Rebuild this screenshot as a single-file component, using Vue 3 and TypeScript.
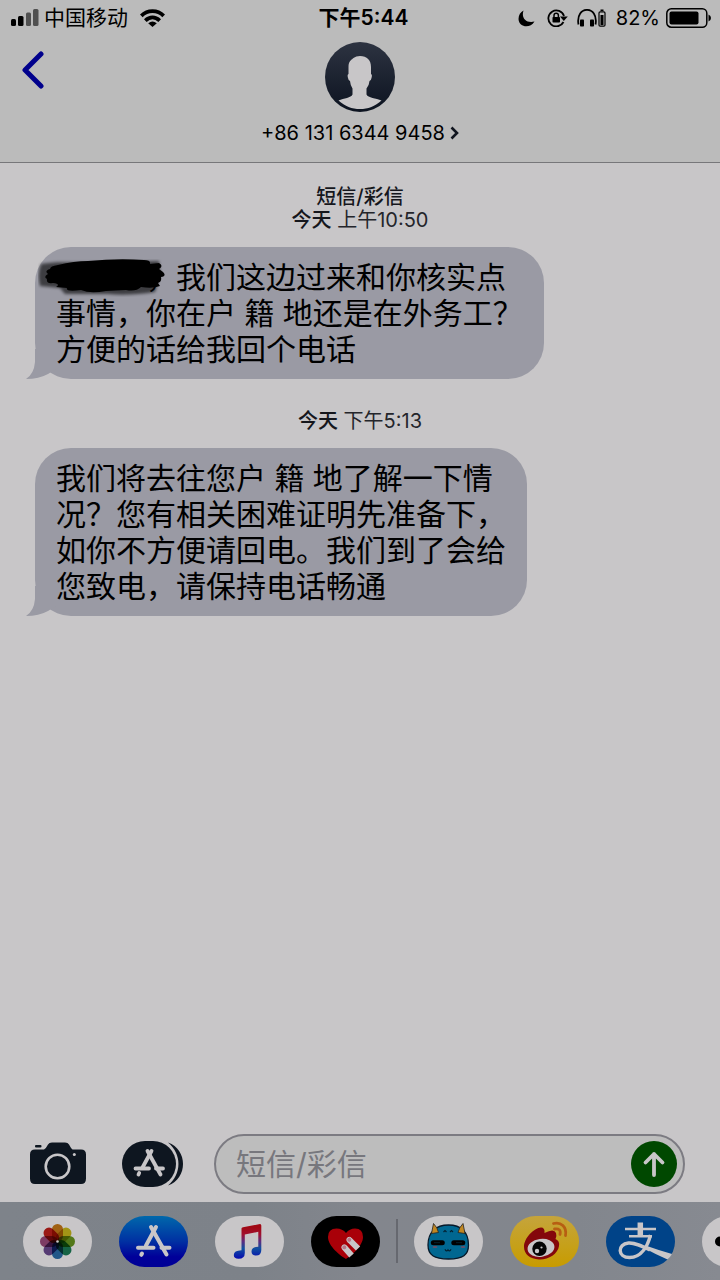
<script setup lang="ts">
import { ref } from 'vue'

interface Message {
  id: number
  service?: string
  day: string
  time: string
  redacted: boolean
  lines: string[]
}

const draft = ref('')

const messages: Message[] = [
  {
    id: 1,
    service: '短信/彩信',
    day: '今天',
    time: '上午10:50',
    redacted: true,
    lines: ['，我们这边过来和你核实点', '事情，你在户 籍 地还是在外务工？', '方便的话给我回个电话'],
  },
  {
    id: 2,
    day: '今天',
    time: '下午5:13',
    redacted: false,
    lines: [
      '我们将去往您户 籍 地了解一下情',
      '况？您有相关困难证明先准备下，',
      '如你不方便请回电。我们到了会给',
      '您致电，请保持电话畅通',
    ],
  },
]

const petals = [
  { angle: 0, color: '#cc7d18' },
  { angle: 45, color: '#cfc01c' },
  { angle: 90, color: '#6a9a20' },
  { angle: 135, color: '#1c8058' },
  { angle: 180, color: '#2a70ad' },
  { angle: 225, color: '#6c4a92' },
  { angle: 270, color: '#a04c80' },
  { angle: 315, color: '#c4201a' },
]
</script>

<template>
  <div class="phone" lang="zh-CN">
    <header class="top">
      <div class="status">
        <div class="status-left">
          <svg class="signal" width="28" height="18" viewBox="0 0 28 18" aria-hidden="true">
            <rect x="0" y="10" width="5" height="7" rx="1.5" />
            <rect x="7" y="7" width="5.500" height="10" rx="1.5" />
            <rect x="15" y="3.500" width="5" height="13.500" rx="1.500" fill="#505050" />
            <rect x="22" y="0" width="5.500" height="17" rx="1.500" fill="#505050" />
          </svg>
          <span>中国移动</span>
          <svg class="wifi" width="25" height="18" viewBox="0 0 25 18" aria-hidden="true">
            <g fill="none" stroke="#000" stroke-width="3.800">
              <path d="M1.300 6.800C7.500 0.500 17.500 0.500 23.700 6.800" />
              <path d="M5.300 11.600C9.700 7.400 15.300 7.400 19.700 11.600" />
            </g>
            <path d="M8.200 14.200Q12.500 10.800 16.800 14.200L12.500 18Z" />
          </svg>
        </div>
        <strong class="clock">下午5:44</strong>
        <div class="status-right">
          <svg width="17" height="17" viewBox="0 0 17 17" aria-hidden="true">
            <path d="M5.500 0.500C3 8 8 13.500 16.500 11.500C12 19 1 17.500 0.500 9C0.500 5 2.500 2 5.500 0.500Z" />
          </svg>
          <svg class="lock" width="21" height="18" viewBox="0 0 21 18" aria-hidden="true">
            <path d="M16.500 13A8 8 0 1 1 17 7" fill="none" stroke="#000" stroke-width="1.800" />
            <path d="M13 7.500H20.800L16.800 12Z" />
            <rect x="5.500" y="8" width="7.500" height="5.500" rx="0.800" />
            <path d="M7 8.500V6.500a2.200 2.200 0 0 1 4.400 0V8.500" fill="none" stroke="#000" stroke-width="1.500" />
          </svg>
          <svg class="headset" width="29" height="18" viewBox="0 0 29 18" aria-hidden="true">
            <path d="M1.500 15.500C-2 -4 22 -4 18.500 15.500" fill="none" stroke="#000" stroke-width="1.800" />
            <rect x="3" y="10.500" width="4" height="7" rx="0.800" />
            <rect x="13" y="10.500" width="4" height="7" rx="0.800" />
            <rect x="22" y="2.800" width="6" height="14.400" rx="1.200" fill="none" stroke="#000" stroke-width="1.200" />
            <rect x="23.500" y="6" width="3" height="10" />
            <rect x="23.500" y="0.500" width="3" height="1.500" />
          </svg>
          <span class="percent">82%</span>
          <svg width="45" height="20" viewBox="0 0 45 20" aria-hidden="true">
            <rect x="0.800" y="0.800" width="40" height="18.400" rx="4.500" fill="none" stroke="#000" stroke-width="1.500" />
            <rect x="3.500" y="3.500" width="29" height="13" rx="2" />
            <path d="M42.500 6.500Q45 7.500 45 10T42.500 13.500Z" />
          </svg>
        </div>
      </div>
      <div class="contact-bar">
        <button class="plain back" type="button" aria-label="返回">
          <svg width="24" height="38" viewBox="0 0 24 38" aria-hidden="true">
            <path d="M20 3L4 19L20 35" fill="none" stroke="#00008c" stroke-width="5" stroke-linecap="round" stroke-linejoin="round" />
          </svg>
        </button>
        <button class="plain contact" type="button">
          <svg width="70" height="70" viewBox="0 0 70 70" aria-hidden="true">
            <defs>
              <linearGradient id="avatar-bg" x1="0" y1="0" x2="0" y2="1">
                <stop offset="0" stop-color="#2d3341" />
                <stop offset="1" stop-color="#0c1320" />
              </linearGradient>
            </defs>
            <circle cx="35" cy="35" r="35" fill="url(#avatar-bg)" />
            <path
              fill="#c8c6c8"
              d="M35 14C42 14 46 18 46 25V32Q47.500 32.500 46.500 36Q46 39 44.500 39Q44 44 41.500 46.500V52.500C43 56 51 56 56.500 58.500C50 64.500 43 67 35 67S20 64.500 13.500 58.500C19 56 26 56 27.500 52.500V46.500Q25.500 44 25 39Q23.500 39 23 36Q22 32.500 23.500 32V25C23.500 18.500 27 17.500 28.500 16Q31 14 35 14Z"
            />
          </svg>
          <span class="number">
            +86 131 6344 9458
            <svg width="9" height="14" viewBox="0 0 9 14" aria-hidden="true">
              <path d="M1.500 1.500L7 7L1.500 12.500" fill="none" stroke="#10151f" stroke-width="2.600" />
            </svg>
          </span>
        </button>
      </div>
    </header>

    <main class="thread">
      <section v-for="message in messages" :key="message.id" class="entry">
        <p class="stamp">
          <b v-if="message.service" class="service">{{ message.service }}</b>
          <span><b>{{ message.day }}</b> {{ message.time }}</span>
        </p>
        <div class="bubble">
          <p class="words"><span v-if="message.redacted" class="redacted"><svg class="scribble" width="130" height="38" viewBox="0 0 130 38" aria-hidden="true">
            <defs>
              <filter id="soft-edge" x="-10%" y="-20%" width="120%" height="140%">
                <feGaussianBlur stdDeviation="1.500" />
              </filter>
            </defs>
            <path d="M3 5C22 1 40 5 70 3L121 2L122 14L117 33Q90 37 70 35L27 35L22 29L2 27Q-1 15 3 5Z" opacity="0.6" filter="url(#soft-edge)" />
            <path d="M20 6Q36 2 50 2Q80 -1 106 1Q113 1 112 5L121 4Q126 7 121 10L125 13Q129 17 123 18Q124 23 120 24L122 27Q115 30 103 28Q98 33 88 31L68 32Q52 35 43 31Q27 33 29 29L18 28Q23 25 15 24Q8 25 9 20Q5 18 10 15Q6 12 12 10Q12 7 20 6Z" />
          </svg></span>{{ message.lines.join('\n') }}</p>
          <svg class="tail" width="30" height="30" viewBox="0 0 30 30" aria-hidden="true">
            <path d="M9 0V13Q8 25 0 30Q13 30 22 25L30 20V0Z" fill="#9a9aa4" />
          </svg>
        </div>
      </section>
    </main>

    <form class="compose" @submit.prevent>
      <button class="plain" type="button" aria-label="相机">
        <svg width="56" height="44" viewBox="0 1.500 56 44" aria-hidden="true">
          <path fill="#0e1620" d="M5 9H14Q16 8 18 4Q19 2 22 2H35Q38 2 39 4Q41 8 42.500 9H51Q56 9 56 14V38Q56 43.500 51 43.500H5Q0 43.500 0 38V14Q0 9 5 9Z" />
          <rect x="5" y="4.500" width="6.500" height="2.500" rx="1" fill="#0e1620" />
          <circle cx="27.500" cy="26" r="11.800" fill="none" stroke="#c8c6c8" stroke-width="2.600" />
          <circle cx="44.300" cy="14" r="1.500" fill="#c8c6c8" />
        </svg>
      </button>
      <button class="plain apps" type="button" aria-label="应用">
        <svg width="62" height="46" viewBox="0 0 62 46" aria-hidden="true">
          <rect width="54" height="46" rx="23" fill="#0e1620" />
          <path d="M46 1.500C56 5 61 14 61 23S56 41 46 44.500C60 33 60 13 46 1.500Z" fill="#0e1620" />
          <g stroke="#c8c6c8" stroke-width="3.800" stroke-linecap="round" fill="none">
            <path d="M29.500 10L20.500 26.500M17.200 32L16.500 33.500" />
            <path d="M13.500 27.500H27M34 27.500H41" />
            <path d="M25.500 10L38.500 33.500" />
          </g>
        </svg>
      </button>
      <div class="field">
        <input v-model="draft" type="text" aria-label="短信/彩信" placeholder="短信/彩信" />
        <button class="plain send" type="submit" aria-label="发送">
          <svg width="46" height="46" viewBox="0 0 46 46" aria-hidden="true">
            <circle cx="23" cy="23" r="23" fill="#004800" />
            <path d="M23 34V13M14.500 21.500L23 13L31.500 21.500" fill="none" stroke="#c8c6c8" stroke-width="3.800" stroke-linecap="round" stroke-linejoin="round" />
          </svg>
        </button>
      </div>
    </form>

    <nav class="dock" aria-label="应用抽屉">
      <div class="group">
        <button class="plain pill" type="button" aria-label="照片">
          <svg class="photos" width="69" height="51" viewBox="0 0 69 51" aria-hidden="true">
            <rect width="69" height="51" rx="25.500" fill="#c8c6c8" />
            <rect v-for="petal in petals" :key="petal.angle" class="petal" x="29" y="8" width="11" height="17.500" rx="5.500" :fill="petal.color" :transform="`rotate(${petal.angle} 34.5 25.5)`" />
            <circle cx="34.500" cy="25.500" r="1.300" fill="#c8c6c8" />
          </svg>
        </button>
        <button class="plain pill" type="button" aria-label="App Store">
          <svg width="69" height="51" viewBox="0 0 69 51" aria-hidden="true">
            <defs>
              <linearGradient id="store-bg" x1="0" y1="0" x2="0" y2="1">
                <stop offset="0" stop-color="#0068ab" />
                <stop offset="0.500" stop-color="#0030a2" />
                <stop offset="0.800" stop-color="#000099" />
                <stop offset="1" stop-color="#000096" />
              </linearGradient>
            </defs>
            <rect width="69" height="51" rx="25.500" fill="url(#store-bg)" />
            <g stroke="#c8c6c8" stroke-width="4" stroke-linecap="round" fill="none">
              <path d="M37 11L27 29.500M23 37.500L22.300 38.800" />
              <path d="M19 31.700H34.500M42.500 31.700H50.500" />
              <path d="M32 11L47.500 38.500" />
            </g>
          </svg>
        </button>
        <button class="plain pill" type="button" aria-label="音乐">
          <svg width="69" height="51" viewBox="0 0 69 51" aria-hidden="true">
            <defs>
              <linearGradient id="note" gradientUnits="userSpaceOnUse" x1="0" y1="8" x2="0" y2="43">
                <stop offset="0.100" stop-color="#a00814" />
                <stop offset="0.300" stop-color="#a01030" />
                <stop offset="0.500" stop-color="#5c2c80" />
                <stop offset="0.700" stop-color="#1050a0" />
                <stop offset="1" stop-color="#0808b0" />
              </linearGradient>
            </defs>
            <rect width="69" height="51" rx="25.500" fill="#c8c6c8" />
            <path fill="url(#note)" d="M28 11.200L45 8Q46.300 8 46.300 9.500V34Q46.300 39.500 41 39.500Q36.500 39.500 36.500 35.500Q36.500 31 43.300 30.800V15.800L29.800 18.500V37Q29.800 42.800 23.500 42.800Q18.800 42.800 18.800 39Q18.800 34.500 26.500 34.200V12.500Q26.500 11.500 28 11.200Z" />
          </svg>
        </button>
        <button class="plain pill" type="button" aria-label="Digital Touch">
          <svg width="69" height="51" viewBox="0 0 69 51" aria-hidden="true">
            <rect width="69" height="51" rx="25.500" fill="#000" />
            <path fill="#a90008" d="M35 43C30 40 17 30.500 17 21Q17 12.500 25.500 12.500Q31.500 12.500 35 17Q38.500 12.500 44 12.500Q52 12.500 52 21C52 30 40 40 35 43Z" />
            <g stroke="#c8c6c8" stroke-width="6">
              <path d="M33.500 31.500L40.500 39.500" />
              <path d="M38.500 24L47 32.500" />
            </g>
            <g fill="#b87888" stroke="#c8c6c8" stroke-width="1">
              <circle cx="33.300" cy="31.300" r="2.500" />
              <circle cx="38.300" cy="23.800" r="2.500" />
            </g>
          </svg>
        </button>
      </div>
      <span class="divider"></span>
      <div class="group">
        <button class="plain pill" type="button" aria-label="表情贴纸">
          <svg width="69" height="51" viewBox="0 0 69 51" aria-hidden="true">
            <rect width="69" height="51" rx="25.500" fill="#c8c6c8" />
            <path d="M34.500 9C47 9 54.500 16 54.500 29C54.500 39 49 43 34.500 43S14 39 14 29C14 16 22 9 34.500 9Z" fill="#006791" stroke="#06192a" stroke-width="1.300" />
            <g fill="#c18722" stroke="#222" stroke-width="0.800" stroke-linejoin="round">
              <path d="M19.500 7.500L17.500 17.500L24.500 16.500Q23.500 11.500 19.500 7.500Z" />
              <path d="M49 7.500L51 17.500L44 16.500Q45 11.500 49 7.500Z" />
            </g>
            <rect x="16.800" y="24.200" width="14" height="5" rx="2.500" />
            <rect x="37.300" y="24.200" width="14" height="5" rx="2.500" />
            <path d="M20 26.700H26M42 26.700H48" stroke="#07384e" stroke-width="0.600" />
            <ellipse cx="21" cy="31" rx="2.500" ry="1" fill="#65506b" />
            <ellipse cx="49" cy="31" rx="2.500" ry="1" fill="#65506b" />
            <path d="M31 33.200Q32.300 36.200 34 33.800Q35.700 36.200 37 33.200M29.500 16L31 14.500L32.500 16M36 16L37.500 14.500L39 16" fill="none" stroke="#032232" stroke-width="1.200" />
          </svg>
        </button>
        <button class="plain pill" type="button" aria-label="微博">
          <svg width="69" height="51" viewBox="0 0 69 51" aria-hidden="true">
            <defs>
              <linearGradient id="weibo-bg" x1="0" y1="0" x2="0" y2="1">
                <stop offset="0" stop-color="#c5a43c" />
                <stop offset="0.600" stop-color="#c6a018" />
                <stop offset="1" stop-color="#c89b00" />
              </linearGradient>
            </defs>
            <rect width="69" height="51" rx="25.500" fill="url(#weibo-bg)" />
            <path d="M14 31C14 22 24 12 31 11.500Q35 11.500 34.500 17Q44 12 46 17Q47 20 45.500 23Q50 25 49 30C48 38 38 44 29 43.500C20 43 14 38 14 31Z" fill="#84070b" />
            <ellipse cx="31" cy="31.800" rx="13.500" ry="9" fill="#c8c6c8" transform="rotate(-8 31 31.800)" />
            <circle cx="29.500" cy="32.800" r="7.200" fill="#050505" />
            <circle cx="27" cy="35" r="2.200" fill="#c8c6c8" />
            <circle cx="31.500" cy="31.500" r="1.100" fill="#c8c6c8" />
            <g fill="none" stroke="#b75e12" stroke-width="2.800" stroke-linecap="round">
              <path d="M43.500 7.500C51 5.500 57 11 55.500 19.500" />
              <path d="M44.500 13Q51.500 12 50 18.500" />
            </g>
          </svg>
        </button>
        <button class="plain pill" type="button" aria-label="支付宝">
          <svg width="69" height="51" viewBox="0 0 69 51" aria-hidden="true">
            <rect width="69" height="51" rx="25.500" fill="#004388" />
            <g fill="none" stroke="#c8c6c8">
              <path d="M19 13H50M23 20.200H46" stroke-width="2.500" />
              <path d="M34.300 6.500V20" stroke-width="5.500" />
              <path d="M44.500 19C42 29 36 41.500 23.500 41.500C11.500 41.500 11 28 22.500 27C29 26.500 36 30 44 34" stroke-width="3.400" />
            </g>
            <path d="M41 30Q52 34 66 38Q64.500 41 61.500 43.500Q50 38.500 39 32.500Z" fill="#c8c6c8" />
          </svg>
        </button>
        <button class="plain pill" type="button" aria-label="更多">
          <svg width="69" height="51" viewBox="0 0 69 51" aria-hidden="true">
            <rect width="69" height="51" rx="25.500" fill="#c8c6c8" />
            <circle cx="18" cy="25.500" r="5" />
            <circle cx="34.500" cy="25.500" r="5" />
            <circle cx="51" cy="25.500" r="5" />
          </svg>
        </button>
      </div>
    </nav>
  </div>
</template>

<style>
body {
  margin: 0;
  background: #c8c6c8;
}
</style>

<style scoped>
.phone {
  display: flex;
  flex-direction: column;
  min-height: 100vh;
  overflow: hidden;
  background: #c8c6c8;
  color: #000;
  font-family: Inter, "Noto Sans CJK SC", sans-serif;
}

.phone svg {
  display: block;
  flex: none;
}

.plain {
  padding: 0;
  border: 0;
  background: none;
  color: inherit;
  font: inherit;
  cursor: pointer;
}

.top {
  border-bottom: 1px solid #77777a;
  background: #bbb;
}

.status {
  display: grid;
  grid-template-columns: 1fr auto 1fr;
  align-items: center;
  height: 36px;
  padding: 0 4px 0 11px;
  font-size: 21px;
  line-height: 36px;
}

.status-left,
.status-right {
  display: flex;
  align-items: center;
}

.signal {
  margin-right: 5px;
}

.wifi {
  margin-left: 12px;
}

.clock {
  font-weight: 600;
}

.status-right {
  justify-content: flex-end;
  padding-right: 5px;
}

.lock {
  margin-left: 12px;
}

.headset {
  margin-left: 9px;
}

.percent {
  margin: 0 6px 0 10px;
  font-size: 20px;
}

.contact-bar {
  display: grid;
  grid-template-columns: 1fr auto 1fr;
  align-items: start;
  padding: 6px 21px 14px;
}

.back {
  justify-self: start;
  margin-top: 9px;
}

.contact {
  display: flex;
  flex-direction: column;
  align-items: center;
  gap: 6px;
}

.number {
  display: flex;
  align-items: center;
  gap: 5px;
  font-size: 20px;
  line-height: 30px;
}

.thread {
  flex: 1;
  padding: 23px 35px 0;
}

.entry {
  margin-bottom: 31px;
}

.stamp {
  display: flex;
  flex-direction: column;
  align-items: center;
  margin: 0 0 15px;
  color: #24252b;
  font-size: 20px;
  line-height: 23px;
}

.stamp b {
  color: #15161c;
  font-weight: 500;
}

.bubble {
  position: relative;
  width: fit-content;
  padding: 12px 21px;
  border-radius: 36px;
  background: #9a9aa4;
}

.words {
  position: relative;
  z-index: 1;
  margin: 0;
  font-size: 30px;
  line-height: 36px;
  white-space: pre-wrap;
}

.redacted {
  position: relative;
  display: inline-block;
  width: 90px;
}

.scribble {
  position: absolute;
  bottom: -9px;
  left: -18px;
}

.tail {
  position: absolute;
  bottom: 0;
  left: -9px;
}

.compose {
  display: flex;
  align-items: center;
  padding: 0 35px 8px 30px;
}

.apps {
  margin: 0 30px 0 36px;
}

.field {
  display: flex;
  flex: 1;
  align-items: center;
  min-width: 0;
  box-sizing: border-box;
  height: 60px;
  padding: 0 6px 0 20px;
  border: 2px solid #7c7b82;
  border-radius: 30px;
  background: #bdbdbd;
}

.field input {
  flex: 1;
  min-width: 0;
  padding: 0;
  border: 0;
  outline: 0;
  background: none;
  color: #000;
  font: inherit;
  font-size: 30px;
  line-height: 44px;
}

.field input::placeholder {
  color: #77777d;
  opacity: 1;
}

.dock {
  display: flex;
  align-items: center;
  height: 78px;
  padding-left: 23px;
  background: linear-gradient(90deg, #7e838a, #7d8289 35%, #83868d 50%, #82868d 80%, #878a91);
}

.group {
  display: flex;
  flex: none;
  gap: 27px;
}

.divider {
  flex: none;
  width: 2px;
  height: 44px;
  margin: 0 16px;
  background: #66686f;
}

.photos {
  isolation: isolate;
}

.petal {
  mix-blend-mode: multiply;
}
</style>
